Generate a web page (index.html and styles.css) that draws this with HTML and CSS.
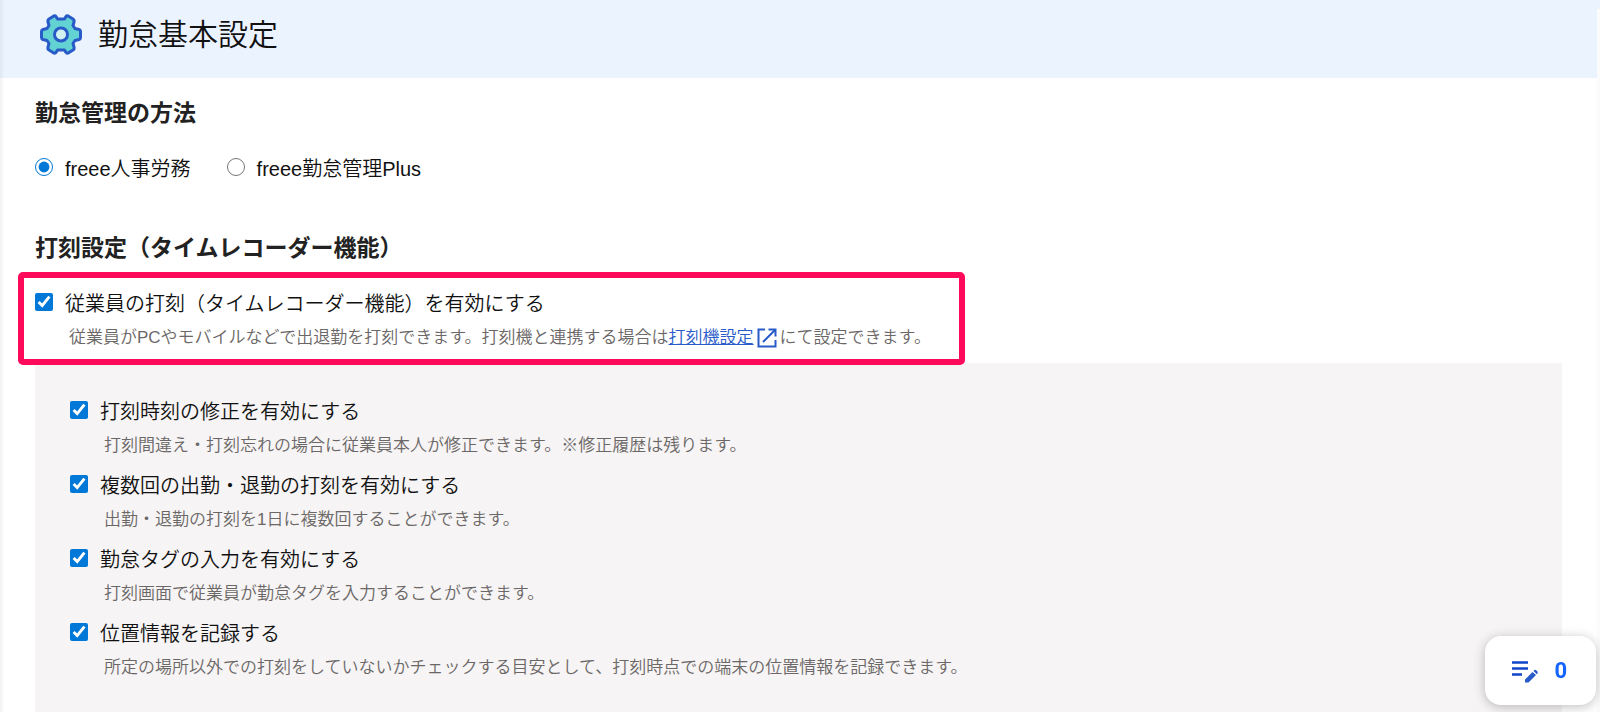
FILE: index.html
```html
<!DOCTYPE html>
<html lang="ja">
<head>
  <meta charset="UTF-8">
  <meta name="viewport" content="width=device-width, initial-scale=1.0">
  <title>勤怠基本設定</title>
  <link rel="stylesheet" href="styles.css">
</head>
<body>
  <div class="page">
    <header class="header">
      <svg class="gear" viewBox="0 0 42 42" aria-hidden="true">
        <path d="M13 2.500Q15 1 16 2.500L17.500 5H24.500L26 2.500Q27 1 29 2.500L33 5Q34.500 6 34 8L33 11.500L35 14.500L39 15.500Q40.500 16 40.500 17.500V23.500Q40.500 25 39 25.500L35 26.500L33 29.500L34 33Q34.500 35 33 36L29 38.500Q27 40 26 38.500L24.500 36H17.500L16 38.500Q15 40 13 38.500L9 36Q7.500 35 8 33L9 29.500L7 26.500L3 25.500Q1.500 25 1.500 23.500V17.500Q1.500 16 3 15.500L7 14.500L9 11.500L8 8Q7.500 6 9 5Z" fill="#63d2d2" stroke="#285ac8" stroke-width="3" stroke-linejoin="round"/>
        <circle cx="21" cy="20.500" r="6.500" fill="#d2f2f2" stroke="#285ac8" stroke-width="3"/>
      </svg>
      <h1>勤怠基本設定</h1>
    </header>

    <main class="content">
      <h2>勤怠管理の方法</h2>
      <div class="methods">
        <label class="method"><input type="radio" name="method" checked>freee人事労務</label>
        <label class="method"><input type="radio" name="method">freee勤怠管理Plus</label>
      </div>

      <h2>打刻設定（タイムレコーダー機能）</h2>
      <div class="setting highlight">
        <label><input type="checkbox" checked>従業員の打刻（タイムレコーダー機能）を有効にする</label>
        <p>従業員がPCやモバイルなどで出退勤を打刻できます。打刻機と連携する場合は<a href="#">打刻機設定<svg class="external" viewBox="0 0 20 20" aria-hidden="true"><path d="M8 1.500H1.500V18.500H18.500V12M11.500 1.500H18.500V8.500M18 2L6 14" fill="none" stroke="#285ac8" stroke-width="2"/></svg></a>にて設定できます。</p>
      </div>

      <div class="panel">
        <div class="setting">
          <label><input type="checkbox" checked>打刻時刻の修正を有効にする</label>
          <p>打刻間違え・打刻忘れの場合に従業員本人が修正できます。※修正履歴は残ります。</p>
        </div>
        <div class="setting">
          <label><input type="checkbox" checked>複数回の出勤・退勤の打刻を有効にする</label>
          <p>出勤・退勤の打刻を1日に複数回することができます。</p>
        </div>
        <div class="setting">
          <label><input type="checkbox" checked>勤怠タグの入力を有効にする</label>
          <p>打刻画面で従業員が勤怠タグを入力することができます。</p>
        </div>
        <div class="setting">
          <label><input type="checkbox" checked>位置情報を記録する</label>
          <p>所定の場所以外での打刻をしていないかチェックする目安として、打刻時点での端末の位置情報を記録できます。</p>
        </div>
      </div>
    </main>
  </div>

  <button class="memo" type="button" aria-label="メモ 0件">
    <svg viewBox="0 0 28 24" aria-hidden="true">
      <path d="M1 3.500H17M1 9.500H17M1 15.500H11" stroke="#0f46c8" stroke-width="2.500"/>
      <path d="M14 20.500L21.500 13L25 16L17.500 23.500H14ZM22.500 12L23.500 11Q24.500 10.500 25.500 11.500L26.500 12.500Q27 13.500 26.500 14.500L25.800 15.300Z" fill="#285ac8"/>
    </svg>
    <span>0</span>
  </button>
</body>
</html>
```
FILE: styles.css
```css
* {
  box-sizing: border-box;
}
body {
  margin: 0;
  font-family: "Liberation Sans", "Noto Sans CJK JP", sans-serif;
  font-weight: 350;
  color: #111;
  background: linear-gradient(#ebf3ff 9px, #fbfbfb 9px);
}
h1, h2, p {
  margin: 0;
}
.page {
  display: flex;
  flex-direction: column;
  min-height: 100vh;
  margin-right: 3px;
  background: #fff;
}
.page::before {
  content: "";
  position: absolute;
  top: 0;
  bottom: 0;
  left: 0;
  width: 5px;
  background: linear-gradient(to right, rgba(0, 0, 0, 0.05), transparent);
}
.header {
  display: flex;
  align-items: center;
  gap: 16px;
  height: 78px;
  padding: 0 40px 8px;
  background: #ebf3ff;
}
.gear {
  width: 42px;
  height: 42px;
}
h1 {
  font-size: 30px;
  font-weight: 350;
  line-height: 40px;
}
.content {
  display: flex;
  flex-direction: column;
  flex: 1;
  padding: 18px 35px 0;
}
h2 {
  font-size: 23px;
  font-weight: bold;
  line-height: 34px;
  color: #222;
}
.methods {
  display: flex;
  gap: 36px;
  margin: 22px 0 45px;
}
label {
  display: flex;
  align-items: center;
  font-size: 20px;
  line-height: 34px;
}
input {
  width: 18px;
  height: 18px;
  margin: 0 12px 4px 0;
  accent-color: #0078d7;
}
.setting p {
  padding-left: 34px;
  font-size: 17px;
  line-height: 34px;
  color: #6b6767;
}
a {
  color: #285ac8;
}
.external {
  width: 20px;
  height: 20px;
  margin: 0 3px;
  vertical-align: -5px;
}
.highlight {
  align-self: flex-start;
  margin: 7px 0 -2px -17px;
  padding: 9px 28px 4px 11px;
  border: 6px solid #ff0a5a;
  border-radius: 5px;
  background: #fff;
  position: relative;
}
.panel {
  display: flex;
  flex-direction: column;
  flex: 1;
  gap: 6px;
  padding: 32px 35px 16px;
  background: #f6f4f4;
}
.memo {
  position: fixed;
  right: 4px;
  bottom: 7px;
  display: flex;
  align-items: center;
  gap: 15px;
  padding: 0 29px 0 26px;
  border: 0;
  border-radius: 16px;
  background: #fff;
  box-shadow: 0 2px 12px rgba(0, 0, 0, 0.25);
  color: #1464ff;
  font: bold 22px/69px Roboto, sans-serif;
}
.memo svg {
  width: 28px;
  height: 24px;
}
```
